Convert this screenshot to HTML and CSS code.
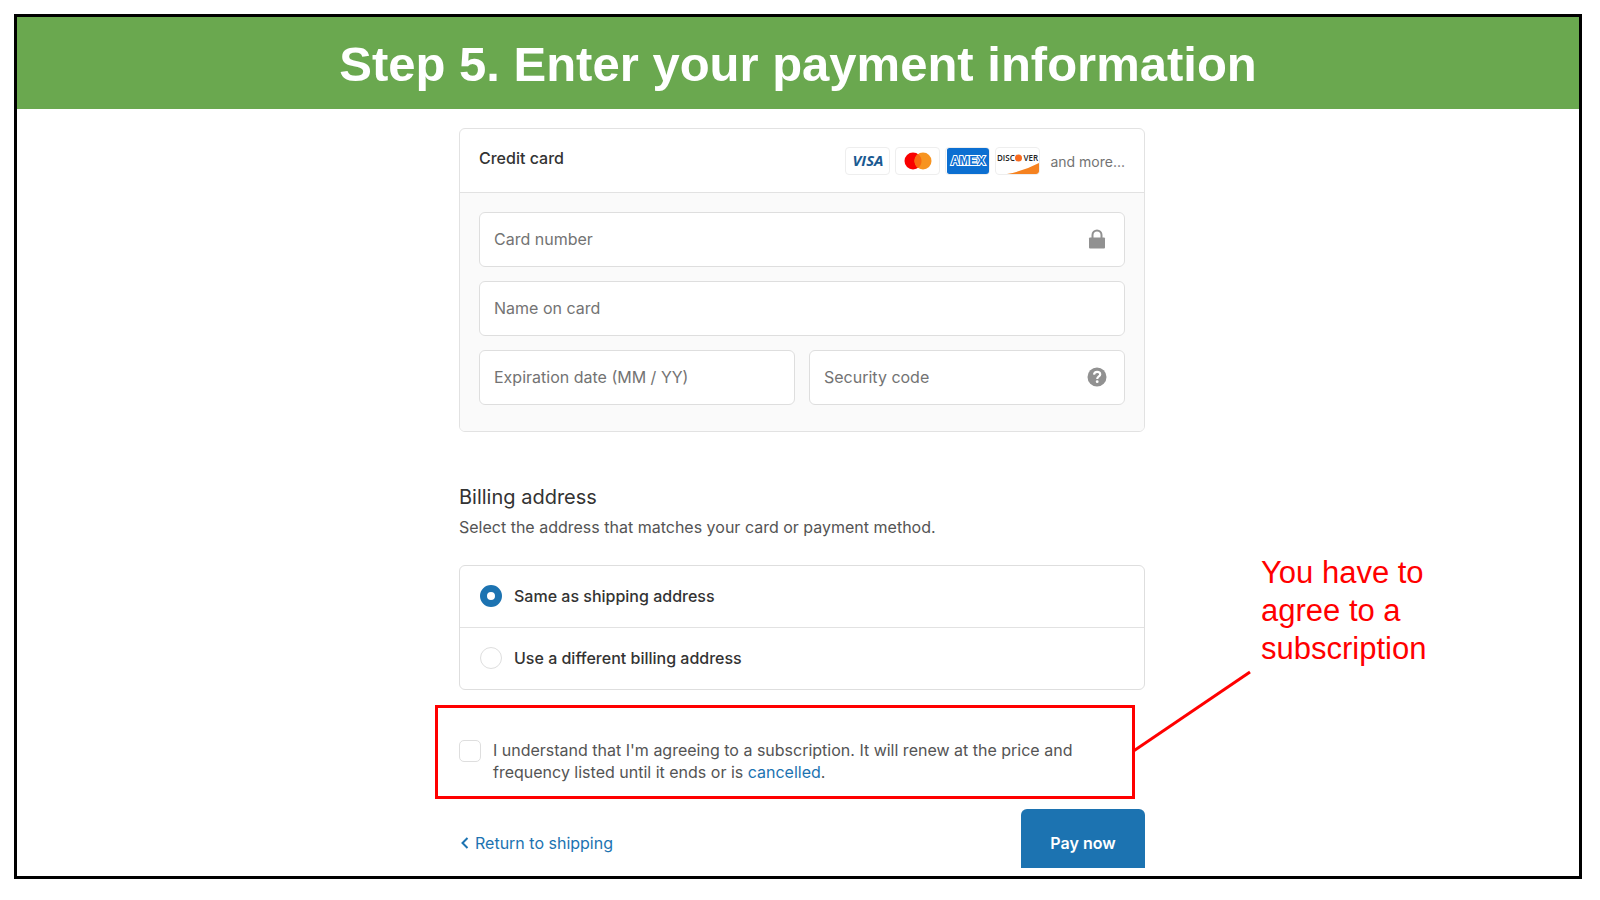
FILE: index.html
```html
<!DOCTYPE html>
<html lang="en">

<head>
    <meta charset="UTF-8">
    <meta name="viewport" content="width=device-width, initial-scale=1.0">
    <title>Step 5. Enter your payment information</title>
    <link rel="stylesheet" href="styles.css">
</head>

<body>
    <main class="slide">
        <h1 class="slide-title">Step 5. Enter your payment information</h1>

        <form class="checkout">
            <section class="card">
                <div class="card-header">
                    <h2>Credit card</h2>
                    <div class="brands">
                        <svg class="brand" viewBox="0 0 43 26" role="img" aria-label="Visa">
                            <text class="visa" x="22" y="18" text-anchor="middle">VISA</text>
                        </svg>
                        <svg class="brand" viewBox="0 0 43 26" role="img" aria-label="Mastercard">
                            <circle cx="17" cy="13" r="8.500" fill="#f90000" />
                            <circle cx="27" cy="13" r="8.500" fill="#f79420" />
                            <path d="M22 6.100a8.500 8.500 0 0 1 0 13.800a8.500 8.500 0 0 1 0-13.800z" fill="#f96a10" />
                        </svg>
                        <svg class="brand" viewBox="0 0 43 26" role="img" aria-label="American Express">
                            <rect x="1" width="43" height="26" rx="2" fill="#0c6fd1" />
                            <text class="amex-text" x="22" y="17" text-anchor="middle">AMEX</text>
                        </svg>
                        <svg class="brand" viewBox="0 0 43 26" role="img" aria-label="Discover">
                            <path d="M11 26Q29 22.500 43 15V24Q43 26 41 26z" fill="#f58220" />
                            <text class="discover" x="1" y="13">DISC</text>
                            <circle cx="22.500" cy="10" r="3.500" fill="#f76b20" />
                            <text class="discover" x="42" y="13" text-anchor="end">VER</text>
                        </svg>
                        <span class="more">and more...</span>
                    </div>
                </div>
                <div class="card-body">
                    <div class="field">
                        <input type="text" placeholder="Card number" aria-label="Card number">
                        <svg class="field-icon" viewBox="0 0 20 20">
                            <path d="M2 9.500Q2 8.500 3 8.500H17Q18 8.500 18 9.500V18.500Q18 19.500 17 19.500H3Q2 19.500 2 18.500z" fill="#919191" />
                            <path d="M5.500 9V6a4.500 4.500 0 0 1 9 0V9" fill="none" stroke="#919191" stroke-width="2" />
                        </svg>
                    </div>
                    <div class="field">
                        <input type="text" placeholder="Name on card" aria-label="Name on card">
                    </div>
                    <div class="field-row">
                        <div class="field">
                            <input type="text" placeholder="Expiration date (MM / YY)" aria-label="Expiration date (MM / YY)">
                        </div>
                        <div class="field">
                            <input type="text" placeholder="Security code" aria-label="Security code">
                            <svg class="field-icon" viewBox="0 0 20 20">
                                <circle cx="10" cy="10" r="9.500" fill="#919191" />
                                <path d="M7 7.700C7.200 5.800 8.300 4.900 10.100 4.900C12 4.900 13.200 5.900 13.200 7.400C13.200 9.500 10.200 9.500 10.200 12" fill="none" stroke="#fff" stroke-width="2.200" />
                                <circle cx="10.200" cy="14.700" r="1.400" fill="#fff" />
                            </svg>
                        </div>
                    </div>
                </div>
            </section>

            <section class="billing">
                <h2>Billing address</h2>
                <p>Select the address that matches your card or payment method.</p>
                <div class="options">
                    <label class="option">
                        <input type="radio" name="billing" checked>
                        Same as shipping address
                    </label>
                    <label class="option">
                        <input type="radio" name="billing">
                        Use a different billing address
                    </label>
                </div>
            </section>

            <div class="consent">
                <input type="checkbox" id="agree">
                <label for="agree">I understand that I'm agreeing to a subscription. It will renew at the price and frequency listed until it ends or is <a href="#">cancelled</a>.</label>

                <!-- callout next to the highlighted checkbox -->
                <svg class="pointer" viewBox="0 0 120 84">
                    <path d="M0 82L118 2" stroke="#ff0000" stroke-width="3" />
                </svg>
                <p class="callout">You have to agree to a subscription</p>
            </div>

            <div class="actions">
                <a class="back" href="#">
                    <svg viewBox="0 0 8 12">
                        <path d="M6.500 1L1.500 6L6.500 11" fill="none" stroke="#1c73b1" stroke-width="2" />
                    </svg>
                    Return to shipping
                </a>
                <button type="submit" class="pay">Pay now</button>
            </div>
        </form>
    </main>
</body>

</html>
```

FILE: styles.css
```css
* {
    box-sizing: border-box;
}

body {
    margin: 0;
    padding: 14px 18px 21px 14px;
    min-height: 100vh;
    display: flex;
    background: #fff;
    color: #545454;
    font-family: Inter, "Liberation Sans", sans-serif;
    font-size: 16px;
    line-height: 22px;
}

h1, h2, p {
    margin: 0;
}

a {
    color: #1c73b1;
    text-decoration: none;
}

.slide {
    flex: 1;
    border: 3px solid #000;
}

.slide-title {
    padding: 19px 20px 17px;
    background: #6aa84f;
    color: #fff;
    font-family: "Liberation Sans", Arial, sans-serif;
    font-size: 49px;
    line-height: 56px;
    text-align: center;
}

.checkout {
    width: 100%;
    max-width: 694px;
    margin: 0 auto;
    padding: 19px 0 0 8px;
}

.card {
    border: 1px solid #e2e2e2;
    border-radius: 6px;
    overflow: hidden;
}

.card-header {
    display: flex;
    align-items: flex-start;
    justify-content: space-between;
    height: 64px;
    padding: 18px 19px 0;
    border-bottom: 1px solid #e2e2e2;
}

.card-header h2 {
    color: #333;
    font-size: 16px;
    font-weight: 500;
}

.brands {
    display: flex;
    align-items: center;
    gap: 5px;
}

.brand {
    width: 45px;
    height: 28px;
    border: 1px solid #eee;
    border-radius: 4px;
}

.visa {
    fill: #1a5a92;
    font: italic bold 15px "Open Sans", sans-serif;
}

.amex-text {
    fill: #0c6fd1;
    stroke: #fff;
    stroke-width: 2px;
    paint-order: stroke;
    font: bold 12px "Liberation Sans", sans-serif;
}

.discover {
    fill: #222;
    font: 600 8px "Open Sans", sans-serif;
}

.more {
    padding: 2px 0 0 5px;
    color: #737373;
    font-size: 14px;
}

.card-body {
    display: flex;
    flex-direction: column;
    gap: 14px;
    padding: 19px 19px 26px;
    background: #fafafa;
}

.field-row {
    display: flex;
    gap: 14px;
}

.field-row .field {
    flex: 1;
}

.field {
    display: flex;
    align-items: center;
    height: 55px;
    padding: 0 17px 2px 14px;
    background: #fff;
    border: 1px solid #dedede;
    border-radius: 6px;
}

.field input {
    flex: 1;
    min-width: 0;
    padding: 0;
    border: none;
    outline: none;
    background: none;
    font: inherit;
}

.field input::placeholder {
    color: #737373;
    opacity: 1;
}

.field-icon {
    width: 20px;
    height: 20px;
}

.billing {
    padding-top: 51px;
}

.billing h2 {
    color: #333;
    font-size: 20px;
    font-weight: 400;
    line-height: 28px;
}

.billing p {
    margin-top: 5px;
}

.options {
    margin-top: 27px;
    border: 1px solid #dedede;
    border-radius: 6px;
}

.option {
    display: flex;
    align-items: center;
    gap: 12px;
    height: 61px;
    padding: 0 20px 2px;
    color: #333;
    font-weight: 500;
}

.option + .option {
    height: 62px;
    border-top: 1px solid #e2e2e2;
}

.option input, .consent input {
    appearance: none;
    flex: none;
    width: 22px;
    height: 22px;
    margin: 0;
    background: #fff;
    border: 1px solid #dedede;
}

.option input {
    border-radius: 50%;
}

.option input:checked {
    border: 7px solid #1c73b1;
}

.consent {
    position: relative;
    display: flex;
    gap: 12px;
    margin: 15px 10px 0 -24px;
    padding: 31px 30px 13px 21px;
    border: 3px solid #ff0000;
}

.consent input {
    margin-top: 1px;
    border-radius: 5px;
}

.pointer {
    position: absolute;
    left: 100%;
    top: -38px;
    width: 120px;
    height: 84px;
}

.callout {
    position: absolute;
    left: 100%;
    bottom: 128px;
    width: 200px;
    margin-left: 129px;
    color: #ff0000;
    font-family: "Liberation Sans", Arial, sans-serif;
    font-size: 31px;
    line-height: 38px;
}

.actions {
    display: flex;
    align-items: flex-start;
    justify-content: space-between;
    margin-top: 10px;
}

.back {
    display: flex;
    align-items: center;
    gap: 6px;
    padding: 23px 0 0 2px;
}

.back svg {
    width: 8px;
    height: 12px;
}

.pay {
    width: 124px;
    height: 59px;
    padding: 8px 0 0;
    border: none;
    border-radius: 6px 6px 0 0;
    background: #1c73b1;
    color: #fff;
    font: 600 16px Inter, "Liberation Sans", sans-serif;
}
```
